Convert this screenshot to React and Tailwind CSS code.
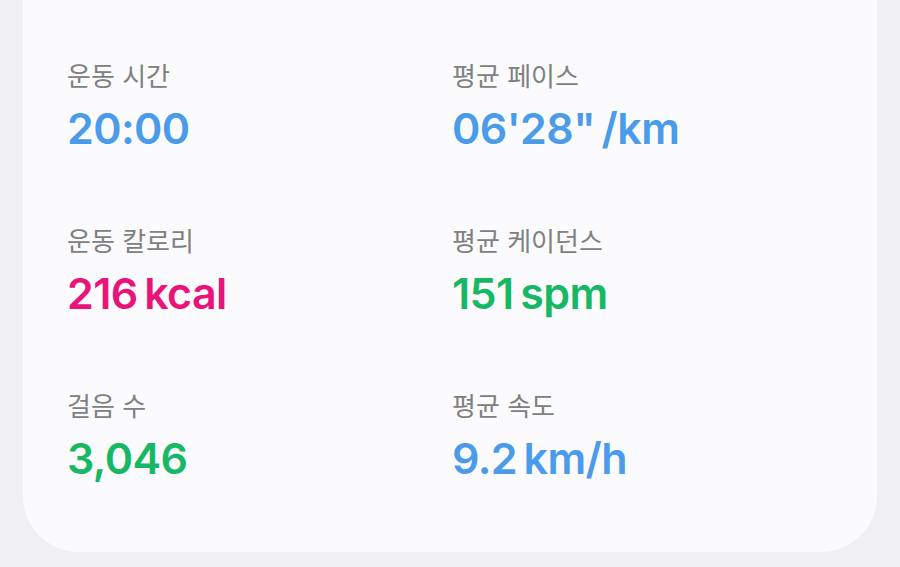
const stats = [
  { label: '운동 시간', value: '20:00', color: 'text-[#4a9be9]' },
  { label: '평균 페이스', value: '06\'28"\u2009/km', color: 'text-[#4a9be9]' },
  { label: '운동 칼로리', value: '216\u2009kcal', color: 'text-[#ea127b]' },
  { label: '평균 케이던스', value: '151\u2009spm', color: 'text-[#17b865]' },
  { label: '걸음 수', value: '3,046', color: 'text-[#17b865]' },
  { label: '평균 속도', value: '9.2\u2009km/h', color: 'text-[#4a9be9]' },
];

export default function App() {
  return (
    <div className="h-[567px] w-[900px] overflow-hidden bg-[#f0f0f2] px-[23px]">
      <div className="rounded-b-[56px] bg-[#fbfbfd] pl-[44px] pt-[61px] h-[552px]">
        <div className="grid grid-cols-[385px_1fr] gap-y-[76px]">
          {stats.map((s) => (
            <div key={s.label} className="flex flex-col gap-[13px]">
              <p
                className="text-[26px] leading-[32px] text-[#808080]"
                style={{ fontFamily: 'Inter, "Noto Sans CJK KR", sans-serif' }}
              >
                {s.label}
              </p>
              <p
                className={`text-[43px] leading-[44px] font-semibold tracking-[-0.6px] ${s.color}`}
                style={{ fontFamily: 'Inter, sans-serif' }}
              >
                {s.value}
              </p>
            </div>
          ))}
        </div>
      </div>
    </div>
  );
}
